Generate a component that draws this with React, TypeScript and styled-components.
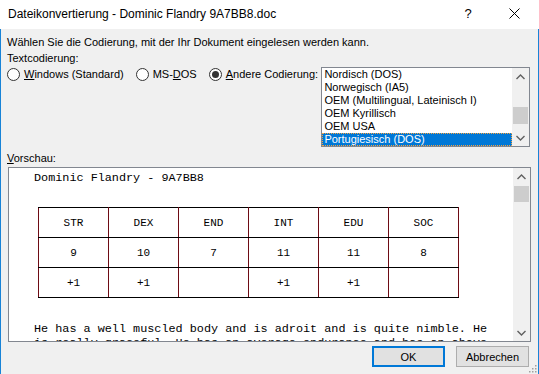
import React from "react";
import styled, { createGlobalStyle } from "styled-components";

const Global = createGlobalStyle`
  html, body { margin: 0; padding: 0; background: #f0f0f0; }
  body { width: 539px; height: 374px; overflow: hidden; font-family: "Liberation Sans", Arial, sans-serif; font-size: 11px; color: #000; }
  * { box-sizing: border-box; }
`;

const Window = styled.div`
  width: 539px;
  height: 374px;
  display: flex;
  flex-direction: column;
  background: #f0f0f0;
`;

const TitleBar = styled.div`
  height: 29px;
  background: #fff;
  display: flex;
  align-items: center;
  padding-left: 8px;
  padding-right: 2px;
  flex: none;
`;

const TitleText = styled.div`
  flex: 1;
  font-size: 12px;
  white-space: nowrap;
  padding-bottom: 2px;
`;

const TitleButton = styled.div`
  width: 46px;
  height: 29px;
  display: flex;
  align-items: center;
  justify-content: center;
  font-size: 13px;
  padding-bottom: 3px;
`;

const Body = styled.div`
  flex: 1;
  position: relative;
  border-left: 1px solid #1883d7;
  border-right: 1px solid #1883d7;
  padding: 5px 8px 0 6px;
  display: flex;
  flex-direction: column;
`;

const Line = styled.div<{ $mt?: number }>`
  height: 16px;
  line-height: 16px;
  white-space: nowrap;
  margin-top: ${(p) => p.$mt ?? 0}px;
`;

const EncodingRow = styled.div`
  display: flex;
  align-items: flex-start;
  margin-top: 1px;
`;

const Radios = styled.div`
  display: flex;
  gap: 12px;
  width: 315px;
`;

const RadioLabel = styled.label`
  display: flex;
  align-items: center;
  gap: 4px;
  height: 14px;
  white-space: nowrap;
`;

const RadioCircle = styled.span<{ $checked?: boolean }>`
  width: 13px;
  height: 13px;
  border-radius: 50%;
  border: 1px solid #333;
  background: #fff;
  display: flex;
  align-items: center;
  justify-content: center;
  flex: none;
  &::after {
    content: "";
    width: 7px;
    height: 7px;
    border-radius: 50%;
    background: #333;
    display: ${(p) => (p.$checked ? "block" : "none")};
  }
`;

const ListBox = styled.div`
  width: 209px;
  height: 80px;
  border: 1px solid #828790;
  background: #fff;
  display: flex;
`;

const ListItems = styled.div`
  flex: 1;
  display: flex;
  flex-direction: column;
`;

const ListItem = styled.div<{ $selected?: boolean }>`
  height: 13px;
  line-height: 13px;
  padding-left: 2px;
  white-space: nowrap;
  background: ${(p) => (p.$selected ? "#0078d7" : "transparent")};
  color: ${(p) => (p.$selected ? "#fff" : "#000")};
  outline: ${(p) => (p.$selected ? "1px dotted #f7a341" : "none")};
  outline-offset: -1px;
`;

const ScrollBar = styled.div`
  width: 17px;
  background: #f0f0f0;
  display: flex;
  flex-direction: column;
  align-items: stretch;
  flex: none;
`;

const ScrollArrow = styled.div`
  height: 17px;
  display: flex;
  align-items: center;
  justify-content: center;
  flex: none;
`;

const Track = styled.div`
  flex: 1;
  position: relative;
`;

const Thumb = styled.div<{ $top: number; $h: number }>`
  position: absolute;
  left: 1px;
  right: 1px;
  top: ${(p) => p.$top}px;
  height: ${(p) => p.$h}px;
  background: #cdcdcd;
`;

const Preview = styled.div`
  margin-left: 1px;
  width: 523px;
  height: 175px;
  border: 1px solid #828790;
  background: #fff;
  display: flex;
  margin-top: 1px;
`;

const PreviewContent = styled.div`
  flex: 1;
  overflow: hidden;
  padding: 3px 0 0 25px;
  font-family: "Liberation Mono", "Courier New", monospace;
  font-size: 11.8px;
  line-height: 14px;
  white-space: pre;
`;

const DocTable = styled.table`
  margin-top: 22px;
  margin-left: 4px;
  border-collapse: collapse;
  table-layout: fixed;
  width: 420px;
  font-size: 11px;
`;

const Cell = styled.td`
  width: 70px;
  height: 30px;
  text-align: center;
  vertical-align: middle;
  border-top: 1px solid #000;
  border-bottom: 1px solid #000;
  border-left: 1px solid #6e0b14;
  border-right: 1px solid #6e0b14;
  padding: 0;
`;

const Paragraph = styled.div`
  margin-top: 24px;
  white-space: pre;
`;

const ButtonRow = styled.div`
  display: flex;
  justify-content: flex-end;
  gap: 11px;
  margin-top: 4px;
  padding-right: 1px;
`;

const Button = styled.button<{ $default?: boolean }>`
  width: 73px;
  height: 21px;
  background: #e1e1e1;
  border: ${(p) => (p.$default ? "2px solid #0078d7" : "1px solid #adadad")};
  font-family: inherit;
  font-size: 11px;
  color: #000;
  padding: 0;
`;

const Grip = styled.svg`
  position: absolute;
  right: 1px;
  bottom: 1px;
`;

const Chevron = ({ up }: { up?: boolean }) => (
  <svg width="9" height="6" viewBox="0 0 9 6">
    <polyline
      points={up ? "0.5,5 4.5,1 8.5,5" : "0.5,1 4.5,5 8.5,1"}
      fill="none"
      stroke="#606060"
      strokeWidth="1.4"
    />
  </svg>
);

const items = [
  "Nordisch (DOS)",
  "Norwegisch (IA5)",
  "OEM (Multilingual, Lateinisch I)",
  "OEM Kyrillisch",
  "OEM USA",
  "Portugiesisch (DOS)",
];

const heads = ["STR", "DEX", "END", "INT", "EDU", "SOC"];
const vals = ["9", "10", "7", "11", "11", "8"];
const mods = ["+1", "+1", "", "+1", "+1", ""];

export default function App() {
  return (
    <Window>
      <Global />
      <TitleBar>
        <TitleText>Dateikonvertierung - Dominic Flandry 9A7BB8.doc</TitleText>
        <TitleButton>?</TitleButton>
        <TitleButton>
          <svg width="11" height="11" viewBox="0 0 11 11">
            <path d="M0.5 0.5 L10.5 10.5 M10.5 0.5 L0.5 10.5" stroke="#000" strokeWidth="1" />
          </svg>
        </TitleButton>
      </TitleBar>
      <Body>
        <Line>Wählen Sie die Codierung, mit der Ihr Dokument eingelesen werden kann.</Line>
        <Line>Textcodierung:</Line>
        <EncodingRow>
          <Radios>
            <RadioLabel>
              <RadioCircle />
              <span>
                <u>W</u>indows (Standard)
              </span>
            </RadioLabel>
            <RadioLabel>
              <RadioCircle />
              <span>
                MS-<u>D</u>OS
              </span>
            </RadioLabel>
            <RadioLabel>
              <RadioCircle $checked />
              <span>
                <u>A</u>ndere Codierung:
              </span>
            </RadioLabel>
          </Radios>
          <ListBox>
            <ListItems>
              {items.map((it, i) => (
                <ListItem key={it} $selected={i === 5}>
                  {it}
                </ListItem>
              ))}
            </ListItems>
            <ScrollBar>
              <ScrollArrow>
                <Chevron up />
              </ScrollArrow>
              <Track>
                <Thumb $top={22} $h={17} />
              </Track>
              <ScrollArrow>
                <Chevron />
              </ScrollArrow>
            </ScrollBar>
          </ListBox>
        </EncodingRow>
        <Line $mt={3}>
          <u>V</u>orschau:
        </Line>
        <Preview>
          <PreviewContent>
            <div>Dominic Flandry - 9A7BB8</div>
            <DocTable>
              <tbody>
                {[heads, vals, mods].map((row, r) => (
                  <tr key={r}>
                    {row.map((c, i) => (
                      <Cell key={i}>{c}</Cell>
                    ))}
                  </tr>
                ))}
              </tbody>
            </DocTable>
            <Paragraph>
              {"He has a well muscled body and is adroit and is quite nimble. He\nis really graceful. He has an average endurance and has an above"}
            </Paragraph>
          </PreviewContent>
          <ScrollBar>
            <ScrollArrow>
              <Chevron up />
            </ScrollArrow>
            <Track>
              <Thumb $top={1} $h={16} />
            </Track>
            <ScrollArrow>
              <Chevron />
            </ScrollArrow>
          </ScrollBar>
        </Preview>
        <ButtonRow>
          <Button $default>OK</Button>
          <Button>Abbrechen</Button>
        </ButtonRow>
        <Grip width="9" height="9" viewBox="0 0 9 9">
          {[
            [7, 1],
            [7, 4],
            [4, 4],
            [7, 7],
            [4, 7],
            [1, 7],
          ].map(([x, y], i) => (
            <rect key={i} x={x} y={y} width="1.5" height="1.5" fill="#a0a0a0" />
          ))}
        </Grip>
      </Body>
    </Window>
  );
}
